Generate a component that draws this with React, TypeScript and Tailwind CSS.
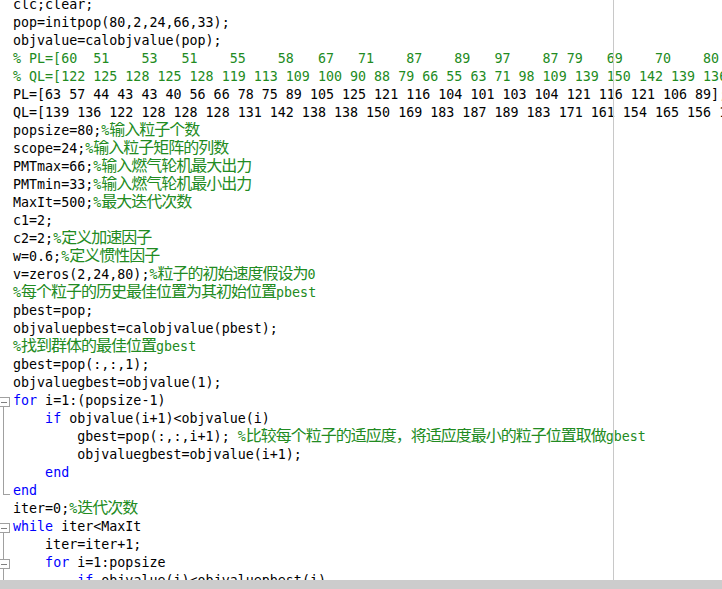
import React from "react";

type Fold = "open" | "openIn" | "mid" | "end";

const lines: { text: string; fold?: Fold }[] = [
  { text: "clc;clear;" },
  { text: "pop=initpop(80,2,24,66,33);" },
  { text: "objvalue=calobjvalue(pop);" },
  { text: "% PL=[60  51    53   51    55    58   67   71    87    89   97    87 79   69    70    80    90" },
  { text: "% QL=[122 125 128 125 128 119 113 109 100 90 88 79 66 55 63 71 98 109 139 150 142 139 136 122" },
  { text: "PL=[63 57 44 43 43 40 56 66 78 75 89 105 125 121 116 104 101 103 104 121 116 121 106 89];" },
  { text: "QL=[139 136 122 128 128 128 131 142 138 138 150 169 183 187 189 183 171 161 154 165 156 143];" },
  { text: "popsize=80;%输入粒子个数" },
  { text: "scope=24;%输入粒子矩阵的列数" },
  { text: "PMTmax=66;%输入燃气轮机最大出力" },
  { text: "PMTmin=33;%输入燃气轮机最小出力" },
  { text: "MaxIt=500;%最大迭代次数" },
  { text: "c1=2;" },
  { text: "c2=2;%定义加速因子" },
  { text: "w=0.6;%定义惯性因子" },
  { text: "v=zeros(2,24,80);%粒子的初始速度假设为0" },
  { text: "%每个粒子的历史最佳位置为其初始位置pbest" },
  { text: "pbest=pop;" },
  { text: "objvaluepbest=calobjvalue(pbest);" },
  { text: "%找到群体的最佳位置gbest" },
  { text: "gbest=pop(:,:,1);" },
  { text: "objvaluegbest=objvalue(1);" },
  { text: "for i=1:(popsize-1)", fold: "open" },
  { text: "    if objvalue(i+1)<objvalue(i)", fold: "mid" },
  { text: "        gbest=pop(:,:,i+1); %比较每个粒子的适应度，将适应度最小的粒子位置取做gbest", fold: "mid" },
  { text: "        objvaluegbest=objvalue(i+1);", fold: "mid" },
  { text: "    end", fold: "mid" },
  { text: "end", fold: "end" },
  { text: "iter=0;%迭代次数" },
  { text: "while iter<MaxIt", fold: "open" },
  { text: "    iter=iter+1;", fold: "mid" },
  { text: "    for i=1:popsize", fold: "openIn" },
  { text: "        if objvalue(i)<objvaluepbest(i)", fold: "mid" },
];

const cjk = /([\u3000-\u9fff\uff00-\uffef]+)/;

// each token is its own flex item so CJK runs can't move the row
function tokens(text: string) {
  const out: { t: string; c: "code" | "kw" | "cm" | "cjk" }[] = [];
  const idx = text.indexOf("%");
  const code = idx >= 0 ? text.slice(0, idx) : text;
  const comment = idx >= 0 ? text.slice(idx) : "";
  code.split(/\b(for|if|end|while)\b/).forEach((p, i) => {
    if (p) out.push({ t: p, c: i % 2 === 1 ? "kw" : "code" });
  });
  comment.split(cjk).forEach((p) => {
    if (p) out.push({ t: p, c: cjk.test(p) ? "cjk" : "cm" });
  });
  return out;
}

const tokenClass = {
  code: "text-black leading-[18px]",
  kw: "text-[#0000ff] leading-[18px]",
  cm: "text-[#228b22] leading-[18px]",
  // line-height picked so the CJK baseline sits on the mono baseline
  cjk: "text-[#228b22] font-['Noto_Sans_CJK_SC',sans-serif] text-[16px] leading-[13.3px] tracking-[-1px]",
};

function FoldMark({ kind }: { kind?: Fold }) {
  if (!kind) return null;
  const c = "#a0a0a0";
  return (
    <svg width="13" height="18" className="block overflow-visible">
      {kind === "openIn" && <line x1="3.5" y1="0" x2="3.5" y2="5" stroke={c} />}
      {(kind === "open" || kind === "openIn") && (
        <>
          <rect x="-2.5" y="5.5" width="12" height="9" fill="white" stroke={c} />
          <line x1="1" y1="10.5" x2="7" y2="10.5" stroke="#808080" />
          <line x1="3.5" y1="15" x2="3.5" y2="18" stroke={c} />
        </>
      )}
      {kind === "mid" && <line x1="3.5" y1="0" x2="3.5" y2="18" stroke={c} />}
      {kind === "end" && (
        <>
          <line x1="3.5" y1="0" x2="3.5" y2="12.5" stroke={c} />
          <line x1="3" y1="12.5" x2="10" y2="12.5" stroke={c} />
        </>
      )}
    </svg>
  );
}

export default function App() {
  return (
    <div className="w-[722px] h-[589px] bg-white flex flex-col overflow-hidden">
      <div className="relative flex-1 overflow-hidden">
        <div className="-mt-[4px] font-['DejaVu_Sans_Mono',monospace] text-[13.33px] leading-[18px]">
          {lines.map((l, i) => (
            <div key={i} className="flex h-[18px] overflow-hidden">
              <div className="w-[13px] shrink-0">
                <FoldMark kind={l.fold} />
              </div>
              <div className="flex items-start">
                {tokens(l.text).map((tk, j) => (
                  <span key={j} className={`block shrink-0 whitespace-pre ${tokenClass[tk.c]}`}>
                    {tk.t}
                  </span>
                ))}
              </div>
            </div>
          ))}
        </div>
        <div className="absolute left-[613px] top-0 bottom-0 w-px bg-[#c8c8c8]" />
      </div>
      <div className="h-[9px] bg-[#cccccc] shrink-0" />
    </div>
  );
}
